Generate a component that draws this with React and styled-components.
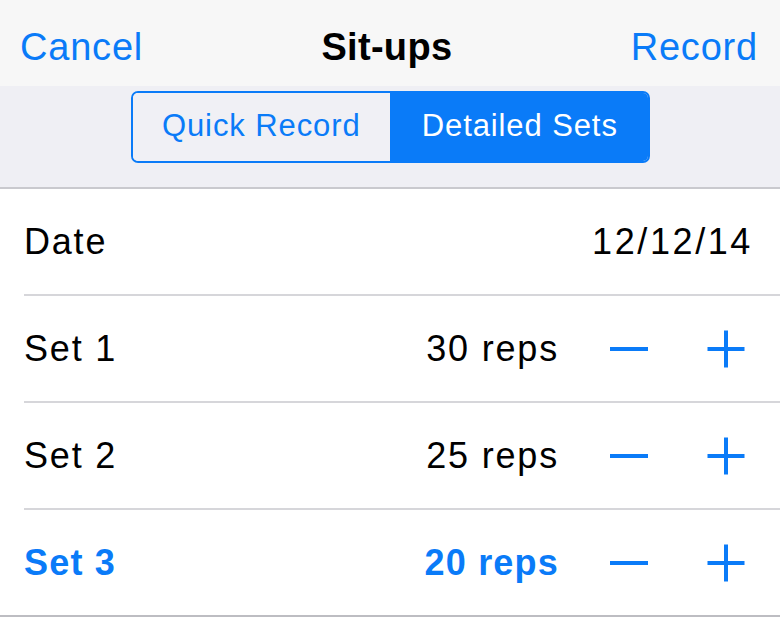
import styled, { createGlobalStyle } from "styled-components";

const BLUE = "#0a7bf8";
const FONT = `"Liberation Sans", Helvetica, Arial, sans-serif`;

const GlobalStyle = createGlobalStyle`
  html, body {
    margin: 0;
    padding: 0;
    background: #ffffff;
    overflow: hidden;
  }
  body {
    font-family: ${FONT};
  }
`;

const Screen = styled.div`
  width: 780px;
  height: 618px;
  display: flex;
  flex-direction: column;
  background: #ffffff;
  overflow: hidden;
`;

const NavBar = styled.div`
  height: 86px;
  display: flex;
  align-items: center;
  justify-content: space-between;
  padding: 9px 22px 0 20px;
  box-sizing: border-box;
  background: #f7f7f7;
`;

const NavLink = styled.span`
  font-size: 38px;
  letter-spacing: 0.8px;
  color: ${BLUE};
`;

const Title = styled.span`
  font-size: 38px;
  font-weight: 700;
  letter-spacing: 0.3px;
  color: #000;
`;

const Band = styled.div`
  height: 103px;
  box-sizing: border-box;
  background: #efeff4;
  border-bottom: 2px solid #c9c9ce;
  display: flex;
  justify-content: center;
  padding-top: 5px;
`;

const Segmented = styled.div`
  width: 519px;
  height: 72px;
  box-sizing: border-box;
  border: 2px solid ${BLUE};
  border-radius: 7px;
  display: grid;
  grid-template-columns: 1fr 1fr;
  overflow: hidden;
`;

const Segment = styled.div`
  display: flex;
  align-items: center;
  justify-content: center;
  padding-bottom: 3px;
  font-size: 31px;
  letter-spacing: 0.9px;
  color: ${(p) => (p.$active ? "#ffffff" : BLUE)};
  background: ${(p) => (p.$active ? BLUE : "#f0f0f5")};
  border-left: ${(p) => (p.$first ? "none" : `2px solid ${BLUE}`)};
`;

const Row = styled.div`
  height: 107px;
  box-sizing: border-box;
  padding-left: 24px;
  display: flex;
  border-bottom: ${(p) => (p.$last ? "2px solid #bdbdc2" : "none")};
`;

const RowInner = styled.div`
  flex: 1;
  display: flex;
  align-items: center;
  padding-right: ${(p) => (p.$plain ? "27px" : "24px")};
  border-bottom: ${(p) => (p.$last ? "none" : "2px solid #d6d6da")};
  font-size: 36px;
  letter-spacing: ${(p) => (p.$highlight ? "1.2px" : "1.8px")};
  color: ${(p) => (p.$highlight ? BLUE : "#000")};
  font-weight: ${(p) => (p.$highlight ? 700 : 400)};
`;

const Label = styled.span`
  flex: 1;
`;

const Value = styled.span`
  margin-right: ${(p) => (p.$stepper ? "40px" : "0")};
  letter-spacing: ${(p) => (p.$date ? "2.6px" : "inherit")};
`;

const Stepper = styled.div`
  display: flex;
  gap: 37px;
`;

const StepButton = styled.button`
  width: 60px;
  height: 60px;
  padding: 0;
  border: none;
  background: none;
  display: flex;
  align-items: center;
  justify-content: center;
  color: ${BLUE};
  cursor: pointer;
`;

function Minus() {
  return (
    <svg width="40" height="40" viewBox="0 0 40 40">
      <line x1="1" y1="20" x2="39" y2="20" stroke="currentColor" strokeWidth="4" />
    </svg>
  );
}

function Plus() {
  return (
    <svg width="40" height="40" viewBox="0 0 40 40">
      <line x1="1.5" y1="20" x2="38.5" y2="20" stroke="currentColor" strokeWidth="4" />
      <line x1="20" y1="1.5" x2="20" y2="38.5" stroke="currentColor" strokeWidth="4" />
    </svg>
  );
}

const sets = [
  { name: "Set 1", reps: 30 },
  { name: "Set 2", reps: 25 },
  { name: "Set 3", reps: 20, active: true },
];

export default function App() {
  return (
    <>
      <GlobalStyle />
      <Screen>
        <NavBar>
          <NavLink>Cancel</NavLink>
          <Title>Sit-ups</Title>
          <NavLink>Record</NavLink>
        </NavBar>
        <Band>
          <Segmented>
            <Segment $first>Quick Record</Segment>
            <Segment $active>Detailed Sets</Segment>
          </Segmented>
        </Band>

        <Row>
          <RowInner $plain>
            <Label>Date</Label>
            <Value $date>12/12/14</Value>
          </RowInner>
        </Row>

        {sets.map((set, i) => {
          const last = i === sets.length - 1;
          return (
            <Row key={set.name} $last={last}>
              <RowInner $last={last} $highlight={set.active}>
                <Label>{set.name}</Label>
                <Value $stepper>{set.reps} reps</Value>
                <Stepper>
                  <StepButton>
                    <Minus />
                  </StepButton>
                  <StepButton>
                    <Plus />
                  </StepButton>
                </Stepper>
              </RowInner>
            </Row>
          );
        })}
      </Screen>
    </>
  );
}
